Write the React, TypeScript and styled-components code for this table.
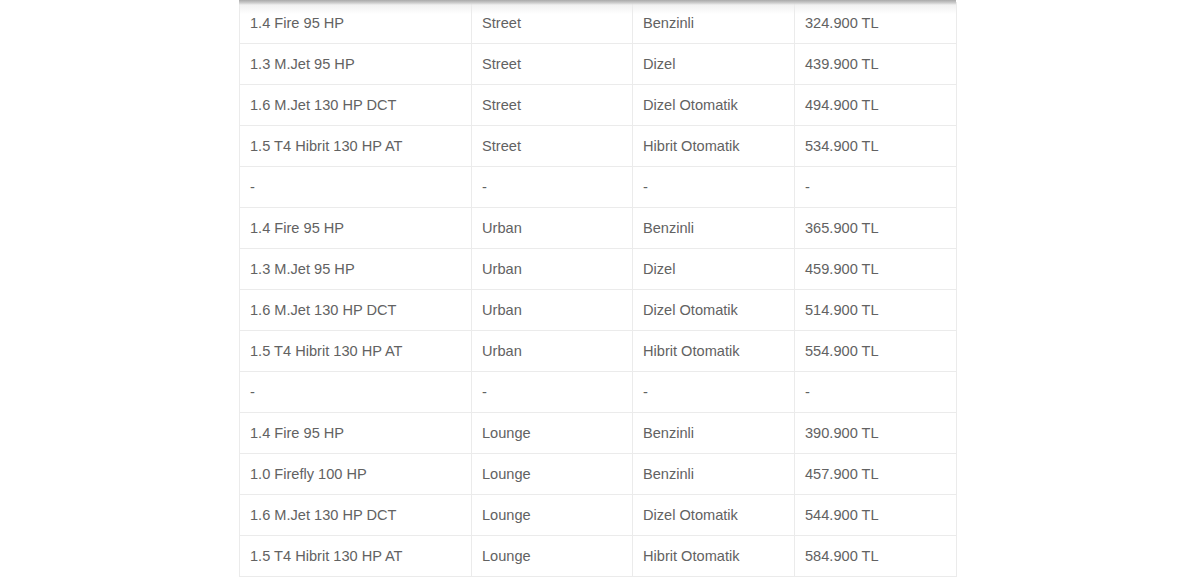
import React from 'react';
import styled, { createGlobalStyle } from 'styled-components';

const GlobalStyle = createGlobalStyle`
  html, body {
    margin: 0;
    padding: 0;
    background: #fff;
  }
  body {
    font-family: "Liberation Sans", Arial, sans-serif;
  }
`;

const Page = styled.div`
  width: 1200px;
  height: 581px;
  overflow: hidden;
  display: flex;
  justify-content: flex-start;
  padding-left: 239px;
  box-sizing: border-box;
`;

const Wrap = styled.div`
  position: relative;
  width: 717px;
  padding-top: 2px;
  background: #fff;
  &::before {
    content: '';
    position: absolute;
    left: 0;
    right: 0;
    top: 0;
    height: 14px;
    background: linear-gradient(to bottom, #a9a9a9 0, #cfcfcf 3px, rgba(235, 235, 235, 0.7) 5px, rgba(255, 255, 255, 0) 14px);
    pointer-events: none;
  }
`;

const Table = styled.table`
  width: 100%;
  border-collapse: collapse;
  table-layout: fixed;
  font-size: 14.6px;
  color: #626262;
`;

const Cell = styled.td<{ $w: number }>`
  width: ${(p) => p.$w}px;
  height: 41px;
  padding: 0 10px;
  border: 1px solid #ebebeb;
  vertical-align: middle;
  white-space: nowrap;
  box-sizing: border-box;
`;

const widths = [232, 161, 162, 162];

const rows: string[][] = [
  ['1.4 Fire 95 HP', 'Street', 'Benzinli', '324.900 TL'],
  ['1.3 M.Jet 95 HP', 'Street', 'Dizel', '439.900 TL'],
  ['1.6 M.Jet 130 HP DCT', 'Street', 'Dizel Otomatik', '494.900 TL'],
  ['1.5 T4 Hibrit 130 HP AT', 'Street', 'Hibrit Otomatik', '534.900 TL'],
  ['-', '-', '-', '-'],
  ['1.4 Fire 95 HP', 'Urban', 'Benzinli', '365.900 TL'],
  ['1.3 M.Jet 95 HP', 'Urban', 'Dizel', '459.900 TL'],
  ['1.6 M.Jet 130 HP DCT', 'Urban', 'Dizel Otomatik', '514.900 TL'],
  ['1.5 T4 Hibrit 130 HP AT', 'Urban', 'Hibrit Otomatik', '554.900 TL'],
  ['-', '-', '-', '-'],
  ['1.4 Fire 95 HP', 'Lounge', 'Benzinli', '390.900 TL'],
  ['1.0 Firefly 100 HP', 'Lounge', 'Benzinli', '457.900 TL'],
  ['1.6 M.Jet 130 HP DCT', 'Lounge', 'Dizel Otomatik', '544.900 TL'],
  ['1.5 T4 Hibrit 130 HP AT', 'Lounge', 'Hibrit Otomatik', '584.900 TL'],
];

export default function App() {
  return (
    <>
      <GlobalStyle />
      <Page>
        <Wrap>
          <Table>
            <tbody>
              {rows.map((r, i) => (
                <tr key={i}>
                  {r.map((c, j) => (
                    <Cell key={j} $w={widths[j]}>
                      {c}
                    </Cell>
                  ))}
                </tr>
              ))}
            </tbody>
          </Table>
        </Wrap>
      </Page>
    </>
  );
}
